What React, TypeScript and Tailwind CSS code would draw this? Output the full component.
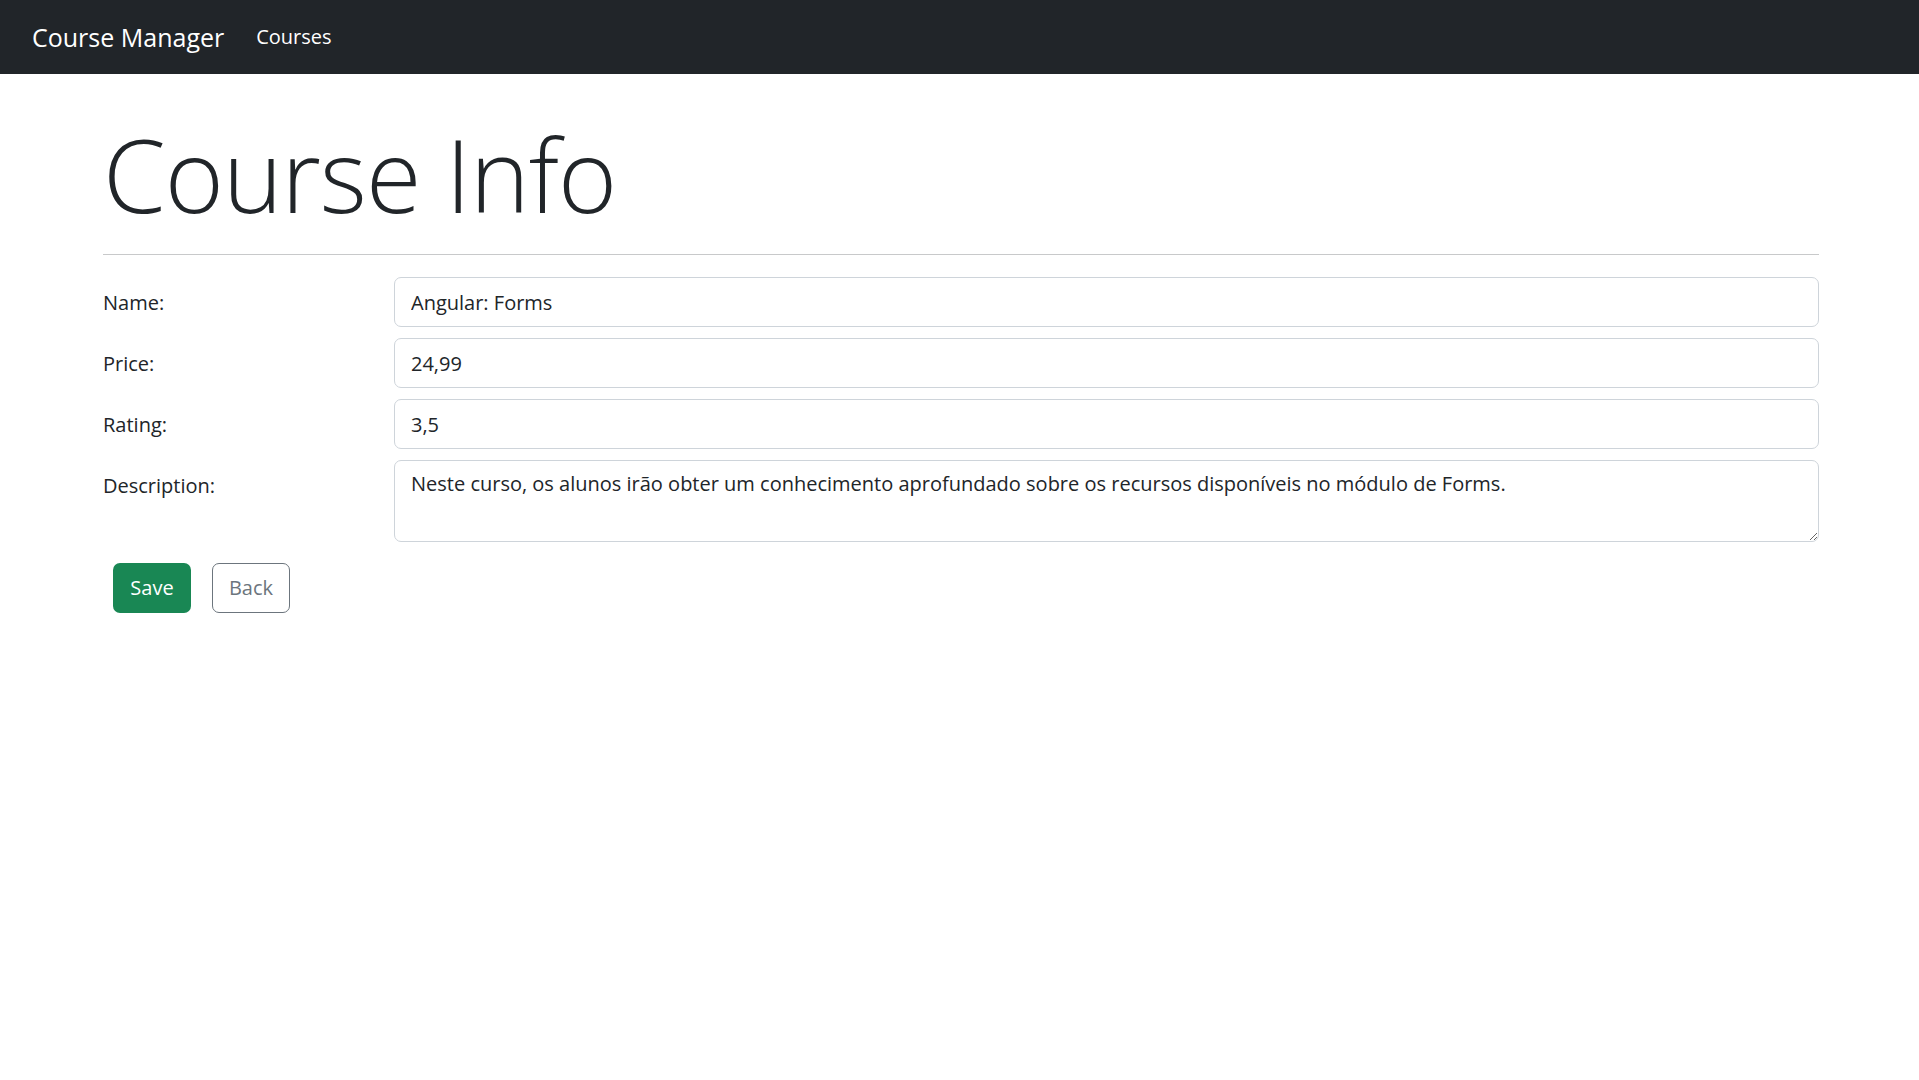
import { useState } from 'react';

const FONT = { fontFamily: '"Open Sans", "Noto Sans", sans-serif' };

type Field = { label: string; value: string; multiline?: boolean };

const FIELDS: Field[] = [
  { label: 'Name:', value: 'Angular: Forms' },
  { label: 'Price:', value: '24,99' },
  { label: 'Rating:', value: '3,5' },
  {
    label: 'Description:',
    value: 'Neste curso, os alunos irão obter um conhecimento aprofundado sobre os recursos disponíveis no módulo de Forms.',
    multiline: true,
  },
];

export default function App() {
  const [values, setValues] = useState(() => FIELDS.map((f) => f.value));

  const update = (idx: number, v: string) =>
    setValues((prev) => prev.map((p, i) => (i === idx ? v : p)));

  return (
    <div className="min-h-screen bg-white text-[#212529]" style={FONT}>
      <nav className="h-[74px] bg-[#212529] flex items-center px-8 gap-8">
        <a href="#" className="text-white text-[25px] leading-none">Course Manager</a>
        <a href="#" className="text-white text-[20px] leading-none">Courses</a>
      </nav>

      <main className="ml-[103px] mr-[100px]">
        <h1 className="text-[101px] font-light leading-[1.2] mt-[40px] mb-[19px] tracking-[-1px]">Course Info</h1>
        <hr className="border-0 border-t border-[#c8c9ca] mb-[22px]" />

        <form className="flex flex-col gap-[11px]" onSubmit={(e) => e.preventDefault()}>
          {FIELDS.map((f, idx) => (
            <div key={f.label} className="flex items-start">
              <label className="w-[291px] shrink-0 text-[20px] pt-[11px] leading-[1.5]">{f.label}</label>
              {f.multiline ? (
                <textarea
                  value={values[idx]}
                  onChange={(e) => update(idx, e.target.value)}
                  className="flex-1 h-[82px] rounded-[7px] border border-[#ced4da] px-[16px] py-[8px] text-[20px] leading-[1.5] outline-none"
                  style={FONT}
                />
              ) : (
                <input
                  value={values[idx]}
                  onChange={(e) => update(idx, e.target.value)}
                  className="flex-1 h-[50px] rounded-[7px] border border-[#ced4da] px-[16px] text-[20px] outline-none"
                  style={FONT}
                />
              )}
            </div>
          ))}

          <div className="flex gap-[21px] pl-[10px] mt-[10px]">
            <button type="submit" className="h-[50px] w-[78px] rounded-[7px] bg-[#198754] text-white text-[20px]">
              Save
            </button>
            <button type="button" className="h-[50px] w-[78px] rounded-[7px] border border-[#6c757d] text-[#6c757d] text-[20px]">
              Back
            </button>
          </div>
        </form>
      </main>
    </div>
  );
}
